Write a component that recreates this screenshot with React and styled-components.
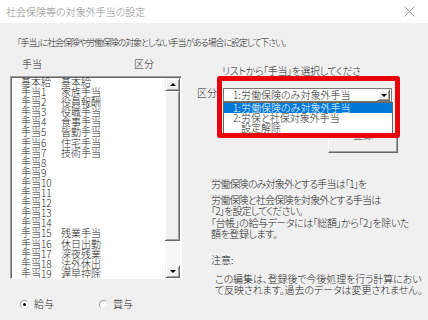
import React from 'react'
import styled, { createGlobalStyle } from 'styled-components'

const ROWS = [
    ['基本給', '基本給'],
    ['手当1', '家族手当'],
    ['手当2', '役員報酬'],
    ['手当3', '役職手当'],
    ['手当4', '食事手当'],
    ['手当5', '皆勤手当'],
    ['手当6', '住宅手当'],
    ['手当7', '技術手当'],
    ['手当8', ''],
    ['手当9', ''],
    ['手当10', ''],
    ['手当11', ''],
    ['手当12', ''],
    ['手当13', ''],
    ['手当14', ''],
    ['手当15', '残業手当'],
    ['手当16', '休日出勤'],
    ['手当17', '深夜残業'],
    ['手当18', '法外休出'],
    ['手当19', '遅早控除'],
]

const OPTIONS = [
    ['1:', '労働保険のみ対象外手当'],
    ['2:', '労保と社保対象外手当'],
    ['', '設定解除'],
]

export default function App() {
    return (
        <React.Fragment>
            <GlobalStyle />
            <WINDOW>
                <TITLEBAR>
                    <span>社会保険等の対象外手当の設定</span>
                    <svg width="11" height="11" viewBox="0 0 11 11">
                        <path d="M0.5 0.5 L10.5 10.5 M10.5 0.5 L0.5 10.5" stroke="#a0a0a0" strokeWidth="1" />
                    </svg>
                </TITLEBAR>
                <BODY>
                    <INTRO>「手当」に社会保険や労働保険の対象としない手当がある場合に設定して下さい。</INTRO>
                    <MAIN>
                        <LEFT>
                            <HEADERS>
                                <span>手当</span>
                                <span>区分</span>
                            </HEADERS>
                            <LISTBOX>
                                <ITEMS>
                                    {ROWS.map(([a, b]) => (
                                        <ROW key={a}>
                                            <CODE>{a}</CODE>
                                            <span>{b}</span>
                                        </ROW>
                                    ))}
                                </ITEMS>
                                <SCROLLBAR>
                                    <ARROWBTN><ARROW $up /></ARROWBTN>
                                    <THUMB />
                                    <TRACK />
                                    <ARROWBTN><ARROW /></ARROWBTN>
                                </SCROLLBAR>
                            </LISTBOX>
                            <RADIOS>
                                <RADIO><DOT $checked />給与</RADIO>
                                <RADIO><DOT />賞与</RADIO>
                            </RADIOS>
                        </LEFT>
                        <RIGHT>
                            <PROMPT>リストから「手当」を選択してください</PROMPT>
                            <COMBOROW>
                                <LABEL>区分</LABEL>
                                <COMBO>
                                    <OPTION_CODE>1:</OPTION_CODE>労働保険のみ対象外手当
                                    <DROPBTN><ARROW /></DROPBTN>
                                </COMBO>
                                <BUTTON>登録</BUTTON>
                                <DROPLIST>
                                    {OPTIONS.map(([c, t], i) => (
                                        <OPTION key={t} $selected={i === 0}>
                                            <OPTION_CODE>{c}</OPTION_CODE>{t}
                                        </OPTION>
                                    ))}
                                </DROPLIST>
                                <HIGHLIGHT />
                            </COMBOROW>
                            <NOTES>
                                <NOTE $top={0} $indent={14} $tight={0.8}>労働保険のみ対象外とする手当は「1」を</NOTE>
                                <NOTE $top={5} $indent={14} $tight={0.8}>労働保険と社会保険を対象外とする手当は<br />「2」を設定してください。</NOTE>
                                <NOTE $top={1} $indent={14} $tight={0.45}>「台帳」の給与データには「総額」から「2」を除いた<br />額を登録します。</NOTE>
                                <NOTE $top={15} $indent={14} $tight={0}>注意:</NOTE>
                                <NOTE $top={8} $indent={18} $tight={0.1}>この編集は、登録後で今後処理を行う計算におい<br />て反映されます。過去のデータは変更されません。</NOTE>
                            </NOTES>
                        </RIGHT>
                    </MAIN>
                </BODY>
            </WINDOW>
        </React.Fragment>
    )
}

const GlobalStyle = createGlobalStyle`
    html, body {
        margin: 0;
        padding: 0;
        background: #f0f0f0;
    }
    body {
        font-family: "Noto Sans CJK JP", "Noto Sans", sans-serif;
        font-size: 10px;
        font-weight: 300;
        color: #262626;
        font-feature-settings: "palt";
    }
`

const WINDOW = styled.div`
    width: 428px;
    height: 320px;
    overflow: hidden;
    display: flex;
    flex-direction: column;
    background: #f0f0f0;
`

const TITLEBAR = styled.div`
    height: 23px;
    flex: none;
    background: #fff;
    display: flex;
    align-items: center;
    justify-content: space-between;
    padding: 0 13px 0 6px;
    color: #8c8c8c;
    font-size: 10px;
`

const BODY = styled.div`
    display: flex;
    flex-direction: column;
`

const INTRO = styled.div`
    margin: 14px 0 0 17px;
    line-height: 12px;
    font-size: 9px;
    letter-spacing: -1.1px;
    white-space: nowrap;
`

const MAIN = styled.div`
    display: flex;
    gap: 15px;
    padding-left: 10px;
`

const LEFT = styled.div`
    width: 172px;
    display: flex;
    flex-direction: column;
`

const HEADERS = styled.div`
    margin-top: 8px;
    height: 13px;
    line-height: 13px;
    display: flex;
    gap: 92px;
    padding-left: 12px;
`

const LISTBOX = styled.div`
    margin-top: 6px;
    height: 203px;
    display: flex;
    background: #fff;
    border-top: 1px solid #a0a0a0;
    border-left: 1px solid #a0a0a0;
    border-right: 1px solid #fff;
    border-bottom: 1px solid #fff;
    box-shadow: inset 1px 1px 0 #696969;
    box-sizing: border-box;
`

const ITEMS = styled.div`
    flex: 1;
    padding: 0 0 0 10px;
    overflow: hidden;
`

const ROW = styled.div`
    display: flex;
    height: 10.1px;
    line-height: 10.1px;
    white-space: nowrap;
`

const CODE = styled.span`
    width: 40px;
    flex: none;
`

const SCROLLBAR = styled.div`
    width: 15px;
    margin: 1px 1px 0 0;
    display: flex;
    flex-direction: column;
    background: #f6f6f6;
`

const ARROWBTN = styled.div`
    height: 13px;
    box-sizing: border-box;
    background: #f0f0f0;
    border-top: 1px solid #f0f0f0;
    border-left: 1px solid #f0f0f0;
    border-right: 1px solid #696969;
    border-bottom: 1px solid #696969;
    box-shadow: inset 1px 1px 0 #fff, inset -1px -1px 0 #a0a0a0;
    display: flex;
    align-items: center;
    justify-content: center;
    flex: none;
`

const ARROW = styled.span`
    width: 0;
    height: 0;
    border-left: 3px solid transparent;
    border-right: 3px solid transparent;
    ${p => p.$up ? 'border-bottom: 3px solid #000;' : 'border-top: 3px solid #000;'}
`

const THUMB = styled.div`
    height: 150px;
    flex: none;
    box-sizing: border-box;
    background: #f0f0f0;
    border-right: 1px solid #696969;
    border-bottom: 1px solid #696969;
    box-shadow: inset 1px 1px 0 #fff, inset -1px -1px 0 #a0a0a0;
`

const TRACK = styled.div`
    flex: 1;
    background: #f7f7f7;
`

const RADIOS = styled.div`
    margin-top: 19px;
    display: flex;
    padding-left: 10px;
    gap: 45px;
`

const RADIO = styled.label`
    display: flex;
    align-items: center;
    gap: 5px;
    line-height: 12px;
`

const DOT = styled.span`
    width: 9px;
    height: 9px;
    box-sizing: border-box;
    border-radius: 50%;
    background: #fff;
    border: 1px solid #a0a0a0;
    border-right-color: #e4e4e4;
    border-bottom-color: #e4e4e4;
    display: flex;
    align-items: center;
    justify-content: center;
    &::after {
        content: '';
        width: 3px;
        height: 3px;
        border-radius: 50%;
        background: ${p => p.$checked ? '#000' : 'transparent'};
    }
`

const RIGHT = styled.div`
    flex: 1;
    display: flex;
    flex-direction: column;
`

const PROMPT = styled.div`
    margin: 16px 0 0 25px;
    width: 138px;
    overflow: hidden;
    white-space: nowrap;
    line-height: 12px;
    letter-spacing: -0.4px;
`

const COMBOROW = styled.div`
    position: relative;
    margin-top: 11px;
    display: flex;
    align-items: center;
    gap: 6px;
    height: 14px;
`

const LABEL = styled.span`
    line-height: 12px;
    margin-top: -5px;
`

const COMBO = styled.div`
    position: relative;
    width: 169px;
    height: 14px;
    box-sizing: border-box;
    background: #fff;
    border: 1px solid #7a7a7a;
    padding-left: 9px;
    line-height: 12px;
    white-space: nowrap;
    display: flex;
`

const DROPBTN = styled(ARROWBTN)`
    position: absolute;
    right: 1px;
    top: 0;
    width: 13px;
    height: 12px;
`

const OPTION_CODE = styled.span`
    display: inline-block;
    width: 8px;
    flex: none;
`

/* the 登録 button sits under the open drop-down, only its lower edge shows */
const BUTTON = styled.div`
    position: absolute;
    left: 131px;
    top: 28px;
    width: 70px;
    height: 37px;
    box-sizing: border-box;
    background: #f0f0f0;
    border-top: 1px solid #fff;
    border-left: 1px solid #fff;
    border-right: 1px solid #696969;
    border-bottom: 1px solid #696969;
    box-shadow: inset -1px -1px 0 #a0a0a0;
    display: flex;
    align-items: center;
    justify-content: center;
`

const DROPLIST = styled.div`
    position: absolute;
    left: 26px;
    top: 14px;
    width: 170px;
    box-sizing: border-box;
    background: #fff;
    border: 1px solid #646464;
    padding-bottom: 1px;
`

const OPTION = styled.div`
    display: flex;
    height: 10px;
    line-height: 10px;
    padding-left: 9px;
    white-space: nowrap;
    background: ${p => p.$selected ? '#0078d7' : 'transparent'};
    color: ${p => p.$selected ? '#fff' : '#262626'};
`

const HIGHLIGHT = styled.div`
    position: absolute;
    left: 20px;
    top: -12px;
    width: 183px;
    height: 62px;
    box-sizing: border-box;
    border: 5px solid #e8000b;
    border-radius: 3px;
`

const NOTES = styled.div`
    margin-top: 76px;
    display: flex;
    flex-direction: column;
`

const NOTE = styled.div`
    margin: ${p => p.$top}px 0 0 ${p => p.$indent}px;
    line-height: 11px;
    letter-spacing: ${p => -p.$tight}px;
    white-space: nowrap;
`
